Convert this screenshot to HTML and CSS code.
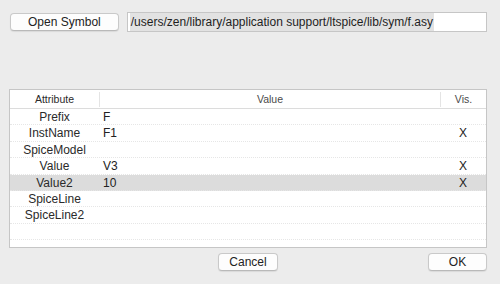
FILE: index.html
```html
<!DOCTYPE html>
<html>
<head>
<meta charset="utf-8">
<link rel="stylesheet" href="styles.css">
</head>
<body>
<div class="win">
  <div class="top">
    <button class="btn open">Open Symbol</button>
    <div class="field"><span class="sel">/users/zen/library/application support/ltspice/lib/sym/f.asy</span></div>
  </div>
  <div class="table">
    <div class="row head">
      <div class="c attr"><span>Attribute</span></div>
      <div class="c val"><span>Value</span></div>
      <div class="c vis"><span>Vis.</span></div>
    </div>
    <div class="row"><div class="c attr">Prefix</div><div class="c val">F</div><div class="c vis"></div></div>
    <div class="row"><div class="c attr">InstName</div><div class="c val">F1</div><div class="c vis">X</div></div>
    <div class="row"><div class="c attr">SpiceModel</div><div class="c val"></div><div class="c vis"></div></div>
    <div class="row"><div class="c attr">Value</div><div class="c val">V3</div><div class="c vis">X</div></div>
    <div class="row selrow"><div class="c attr">Value2</div><div class="c val">10</div><div class="c vis">X</div></div>
    <div class="row"><div class="c attr">SpiceLine</div><div class="c val"></div><div class="c vis"></div></div>
    <div class="row"><div class="c attr">SpiceLine2</div><div class="c val"></div><div class="c vis"></div></div>
    <div class="row"><div class="c attr"></div><div class="c val"></div><div class="c vis"></div></div>
  </div>
  <div class="bottom">
    <span></span>
    <button class="btn cancel">Cancel</button>
    <button class="btn ok">OK</button>
  </div>
</div>
</body>
</html>
```

FILE: styles.css
```css
html, body {
  margin: 0;
  padding: 0;
  background: #ececec;
  width: 500px;
  height: 284px;
  overflow: hidden;
  font-family: "Liberation Sans", Arial, sans-serif;
  color: #222;
}
.win {
  padding: 12px 13px 0 9px;
}
.top {
  display: flex;
  align-items: flex-start;
  gap: 8px;
  padding-left: 1px;
}
.btn {
  font-family: "Liberation Sans", Arial, sans-serif;
  font-size: 12px;
  color: #222;
  background: #fdfdfd;
  border: 1px solid #c9c9c9;
  border-bottom-color: #b9b9b9;
  border-radius: 4px;
  box-shadow: 0 1px 1px rgba(0,0,0,0.08);
  padding: 0;
  margin: 0;
  height: 18px;
  line-height: 16px;
}
.open {
  width: 109px;
  margin-top: 1px;
}
.field {
  width: 357px;
  height: 18px;
  background: #fff;
  border: 1px solid #c6c6c6;
  box-sizing: content-box;
  padding-left: 2px;
  display: flex;
  align-items: center;
  font-size: 12px;
  color: #1e1e1e;
  white-space: nowrap;
}
.sel {
  background: #e2e2e2;
  line-height: 16px;
  padding: 1px 1px 1px 1px;
}
.table {
  margin-top: 57px;
  width: 476px;
  height: 157px;
  background: #fff;
  border: 1px solid #c6c6c6;
  overflow: hidden;
}
.row {
  display: grid;
  grid-template-columns: 89px 341px 46px;
  height: 16.4px;
  border-bottom: 1px dotted #e6e6e6;
  box-sizing: border-box;
  font-size: 12px;
  line-height: 16px;
  align-items: center;
}
.row.head {
  height: 19px;
  border-bottom: 1px solid #dcdcdc;
  font-size: 10.5px;
  color: #4a4a4a;
}
.head .c {
  text-align: center;
  height: 15px;
  line-height: 15px;
}
.head .val, .head .vis {
  border-left: 1px solid #e4e4e4;
}
.row .attr {
  text-align: center;
  color: #2a2a2a;
}
.row .val {
  padding-left: 4px;
}
.row .vis {
  text-align: center;
}
.row.head .val {
  padding-left: 0;
}
.selrow {
  background: #dcdcdc;
}
.bottom {
  display: grid;
  grid-template-columns: 1fr auto 1fr;
  width: 478px;
  margin-top: 5px;
}
.cancel {
  width: 60px;
}
.ok {
  width: 59px;
  justify-self: end;
}
```
